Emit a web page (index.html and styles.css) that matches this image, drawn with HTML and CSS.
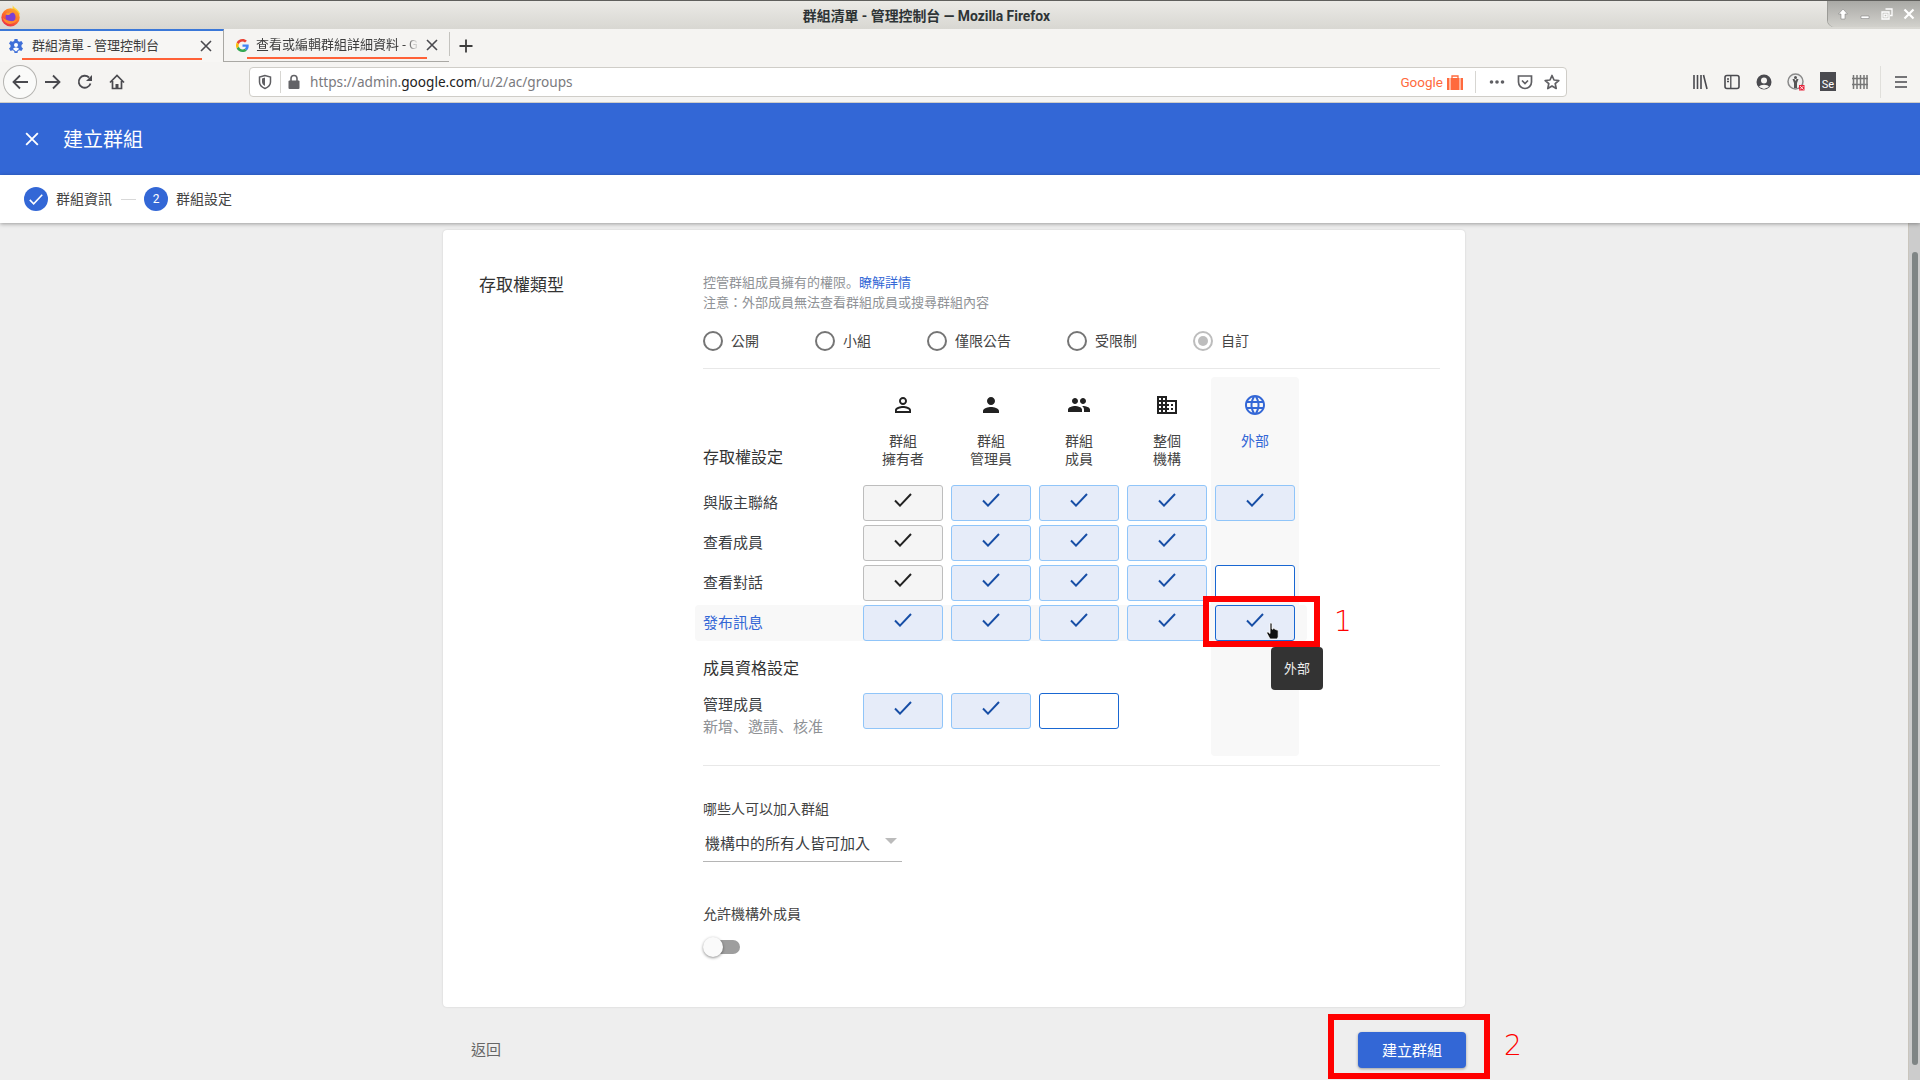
FILE: index.html
```html
<!DOCTYPE html>
<html lang="zh-Hant">
<head>
<meta charset="utf-8">
<title>群組清單 - 管理控制台</title>
<link rel="stylesheet" href="styles.css">
</head>
<body>
<svg class="defs" width="0" height="0" aria-hidden="true">
  <defs>
    <linearGradient id="fxbody" x1="0.8" y1="0" x2="0.2" y2="1">
      <stop offset="0" stop-color="#ffb02e"/><stop offset=".5" stop-color="#ff6a2a"/><stop offset="1" stop-color="#e8274f"/>
    </linearGradient>
  </defs>
  <symbol id="check" viewBox="0 0 18 14"><path d="M1 7.5 6 12.6 17 1" fill="none" stroke="currentColor" stroke-width="2"/></symbol>
  <symbol id="close" viewBox="0 0 12 12"><path d="M1 1 11 11M11 1 1 11" fill="none" stroke="currentColor" stroke-width="1.6"/></symbol>
  <symbol id="gfav" viewBox="0 0 48 48">
    <path fill="#EA4335" d="M24 9.5c3.5 0 6.700 1.200 9.200 3.600l6.900-6.900C35.900 2.400 30.500 0 24 0 14.600 0 6.500 5.400 2.600 13.200l8 6.200C12.500 13.700 17.800 9.500 24 9.500z"/>
    <path fill="#4285F4" d="M46.900 24.500c0-1.600-.1-3.100-.4-4.500H24v9h12.900c-.6 3-2.200 5.500-4.700 7.200l7.700 6c4.500-4.200 7-10.300 7-17.700z"/>
    <path fill="#FBBC05" d="M10.500 28.600c-.5-1.400-.8-3-.8-4.600s.3-3.200.8-4.600l-8-6.200C.9 16.500 0 20.100 0 24s.9 7.500 2.600 10.800l7.900-6.200z"/>
    <path fill="#34A853" d="M24 48c6.500 0 11.900-2.100 15.900-5.800l-7.700-6c-2.200 1.500-4.900 2.300-8.200 2.300-6.200 0-11.500-4.200-13.400-9.900l-8 6.200C6.500 42.600 14.600 48 24 48z"/>
  </symbol>
</svg>

<header class="titlebar">
  <svg class="fx-logo" viewBox="0 0 24 24" width="22" height="24">
    <path fill="#ffd43a" d="M14 0c0 3 6 4 8 10l-9 2z"/>
    <circle cx="11.500" cy="13.500" r="10" fill="url(#fxbody)"/>
    <circle cx="11.500" cy="13" r="5.500" fill="#7b3fd6"/>
    <path fill="#ff9a2e" d="M6 10c2-3 7-3 9-1-2-.5-4 0-4.500 1.500C9 11 7 11 6 10z"/>
    <path fill="#ff8a30" d="M3 14c1 5 6 8 11 6 3-1 5-3 6-6-2 3-6 4-9 3.500-3-.5-6-1.500-8-3.500z"/>
  </svg>
  <div class="window-title">群組清單 - 管理控制台 — Mozilla Firefox</div>
  <div class="window-buttons">
    <svg viewBox="0 0 12 12" width="12" height="12"><path d="M6 1 1.500 6H4v5h4V6h2.500z" fill="#fff" stroke="#777" stroke-width=".5"/></svg>
    <svg viewBox="0 0 12 12" width="12" height="12"><path d="M2 8h8v2.500H2z" fill="#fff" stroke="#777" stroke-width=".5"/></svg>
    <svg viewBox="0 0 12 12" width="12" height="12"><path d="M4.500 1h6.500v6.500H9M1 4h7v7H1zM3 6.200h3v2.600H3z" fill="none" stroke="#fff" stroke-width="1.300"/></svg>
    <svg viewBox="0 0 12 12" width="12" height="12"><path d="M1.500 1.500 10.500 10.500M10.500 1.500 1.500 10.500" fill="none" stroke="#fff" stroke-width="2.200"/></svg>
  </div>
</header>

<nav class="tabstrip">
  <div class="tab tab-active">
    <svg class="favicon" viewBox="0 0 16 16" width="16" height="16"><path fill="#3f6fd8" d="M6.500 1h3l.4 2 1.600.8L13.400 3 15 5.500l-1.500 1.400v2.200L15 10.500 13.400 13l-1.900-.8-1.600.8-.4 2h-3l-.4-2-1.600-.8-1.900.8L1 10.500l1.500-1.400V6.900L1 5.500 2.600 3l1.900.8L6.100 3z"/><circle cx="8" cy="7" r="2" fill="#fff"/><path fill="#fff" d="M5 11c1-2 5-2 6 0l-3 2.500z"/></svg>
    <span class="tab-label">群組清單 - 管理控制台</span>
    <svg class="tab-close" width="12" height="12"><use href="#close"/></svg>
    <span class="tab-mark mark-one"></span>
  </div>
  <div class="tab tab-idle">
    <svg class="favicon favicon-g" width="13" height="13"><use href="#gfav"/></svg>
    <span class="tab-label tab-fade">查看或編輯群組詳細資料 - G</span>
    <svg class="tab-close" width="12" height="12"><use href="#close"/></svg>
    <span class="tab-mark mark-two"></span>
  </div>
  <span class="tab-sep"></span>
  <svg class="new-tab" viewBox="0 0 16 16" width="16" height="16"><path d="M8 1.500v13M1.500 8h13" stroke="currentColor" stroke-width="1.800" fill="none"/></svg>
</nav>

<div class="toolbar">
  <span class="slot slot-back"><svg viewBox="0 0 18 18" width="18" height="18"><path d="M17 9H2.500M9 2.500 2.500 9 9 15.500" fill="none" stroke="currentColor" stroke-width="1.800"/></svg></span>
  <span class="slot slot-forward"><svg viewBox="0 0 18 18" width="18" height="18"><path d="M1 9h14.500M9 2.500 15.500 9 9 15.500" fill="none" stroke="currentColor" stroke-width="1.800"/></svg></span>
  <span class="slot"><svg viewBox="0 0 16 16" width="16" height="16"><path d="M13.500 9.500A6 6 0 1 1 12 3.500" fill="none" stroke="currentColor" stroke-width="1.800"/><path d="M15 1v6H9z" fill="currentColor"/></svg></span>
  <span class="slot"><svg viewBox="0 0 16 16" width="16" height="16"><path d="M1 8.500 8 1.500l7 7M3.500 7v7.500h9V7" fill="none" stroke="currentColor" stroke-width="1.700"/><path d="M6.500 10h3v4.500h-3z" fill="currentColor"/></svg></span>

  <div class="urlbar">
    <svg class="url-shield" viewBox="0 0 16 16" width="16" height="16"><path d="M8 1.500 2.500 3v5c0 3.500 3 5.500 5.500 6.500 2.500-1 5.500-3 5.500-6.500V3z" fill="none" stroke="currentColor" stroke-width="1.500"/><path d="M8 3.500 5 4.500V8c0 2 1.500 3.300 3 4z" fill="currentColor"/></svg>
    <span class="url-sep"></span>
    <svg class="url-lock" viewBox="0 0 14 16" width="14" height="16"><path d="M4 7V4.500a3 3 0 0 1 6 0V7" fill="none" stroke="currentColor" stroke-width="1.600"/><rect x="1.500" y="6.500" width="11" height="8.500" rx="1" fill="currentColor"/></svg>
    <span class="url-text">https://admin.<b>google.com</b>/u/2/ac/groups</span>
    <span class="url-google">Google</span>
    <svg class="url-bag" viewBox="0 0 16 16" width="16" height="16"><path d="M5 4V2h6v2" fill="none" stroke="#ff6a3d" stroke-width="1.300"/><rect x="0" y="4" width="16" height="12" fill="#ff6a3d"/><path d="M3 4v12M13 4v12" stroke="#fff" stroke-width="1"/></svg>
    <span class="url-sep url-sep-right"></span>
    <svg class="url-act" viewBox="0 0 18 16" width="18" height="16"><circle cx="3.500" cy="8" r="1.800" fill="currentColor"/><circle cx="9" cy="8" r="1.800" fill="currentColor"/><circle cx="14.500" cy="8" r="1.800" fill="currentColor"/></svg>
    <svg class="url-act" viewBox="0 0 16 16" width="16" height="16"><path d="M1.500 2h13v6a6.500 6.500 0 0 1-13 0z" fill="none" stroke="currentColor" stroke-width="1.700"/><path d="M5 6.500 8 9.500l3-3" fill="none" stroke="currentColor" stroke-width="1.700"/></svg>
    <svg class="url-act" viewBox="0 0 16 16" width="16" height="16"><path d="M8 1.500 10 6l4.800.5-3.600 3.200 1 4.800L8 12l-4.200 2.500 1-4.800L1.200 6.500 6 6z" fill="none" stroke="currentColor" stroke-width="1.700" stroke-linejoin="round"/></svg>
  </div>

  <div class="tool-group">
    <span class="slot"><svg viewBox="0 0 16 16" width="16" height="16"><path d="M2 1v14M5.500 1v14M9 1v14M11.500 1l3.500 14" fill="none" stroke="currentColor" stroke-width="1.600"/></svg></span>
    <span class="slot"><svg viewBox="0 0 16 16" width="16" height="16"><rect x="1" y="1.500" width="14" height="13" rx="2" fill="none" stroke="currentColor" stroke-width="1.600"/><path d="M6.800 2v12M3 5h2M3 7.500h2" stroke="currentColor" stroke-width="1.300"/></svg></span>
    <span class="slot"><svg viewBox="0 0 16 16" width="16" height="16"><circle cx="8" cy="8" r="7.500" fill="currentColor"/><circle cx="8" cy="6.500" r="3" fill="#f5f4f2"/><path d="M3 13c1-3 9-3 10 0l-5 2z" fill="#f5f4f2"/></svg></span>
    <span class="slot"><svg viewBox="0 0 18 18" width="18" height="18"><circle cx="8.500" cy="8.500" r="7.500" fill="#eee" stroke="#8a8a8a" stroke-width="1.500"/><circle cx="8.500" cy="4.500" r="1.500" fill="#555"/><path d="M5.500 6h2l1 2 1-2h2L10 10v5H7v-5z" fill="#555"/><rect x="12" y="12" width="5.500" height="5.500" fill="#e8243c"/><path d="M13 13l3.500 3.500M16.500 13 13 16.500" stroke="#fff" stroke-width=".8"/></svg></span>
    <span class="slot"><span class="se-icon">Se</span></span>
    <span class="slot"><svg viewBox="0 0 16 16" width="16" height="16"><path d="M1.500 1v14M5 1v14M8.500 1v14M12 1v14M15 1v14M0 4.500h16M0 10.500h16" fill="none" stroke="#777" stroke-width="1.500"/></svg></span>
    <span class="tool-sep"></span>
    <span class="slot slot-menu"><svg viewBox="0 0 14 14" width="14" height="14"><path d="M1 2h12M1 7h12M1 12h12" stroke="currentColor" stroke-width="1.600"/></svg></span>
  </div>
</div>

<div class="appbar">
  <svg class="appbar-close" width="14" height="14"><use href="#close"/></svg>
  <h1 class="appbar-title">建立群組</h1>
</div>

<div class="stepper">
  <span class="step-dot"><svg width="14" height="11"><use href="#check"/></svg></span>
  <span class="step-label">群組資訊</span>
  <span class="step-line"></span>
  <span class="step-dot">2</span>
  <span class="step-label">群組設定</span>
</div>

<div class="workspace">
  <main class="page">
    <section class="card">
      <h2 class="card-heading">存取權類型</h2>
      <div class="card-body">
        <p class="help">控管群組成員擁有的權限。<a class="link">瞭解詳情</a><br>注意：外部成員無法查看群組成員或搜尋群組內容</p>

        <div class="radios">
          <label class="radio"><span class="radio-ring"></span>公開</label>
          <label class="radio"><span class="radio-ring"></span>小組</label>
          <label class="radio"><span class="radio-ring"></span>僅限公告</label>
          <label class="radio"><span class="radio-ring"></span>受限制</label>
          <label class="radio"><span class="radio-ring radio-on"></span>自訂</label>
        </div>

        <hr class="rule">

        <div class="matrix">
          <div class="col-shade"></div>
          <div class="row-shade"></div>

          <div class="matrix-title r1 c1">存取權設定</div>
          <div class="head r1 c2"><svg viewBox="0 0 24 24" width="24" height="24"><path d="M12 5.900a2.100 2.100 0 1 1 0 4.200 2.100 2.100 0 0 1 0-4.200m0 9c2.970 0 6.100 1.460 6.100 2.100v1.100H5.900V17c0-.64 3.130-2.100 6.100-2.100M12 4C9.790 4 8 5.790 8 8s1.790 4 4 4 4-1.790 4-4-1.790-4-4-4zm0 9c-2.670 0-8 1.340-8 4v3h16v-3c0-2.660-5.330-4-8-4z"/></svg><span>群組<br>擁有者</span></div>
          <div class="head r1 c3"><svg viewBox="0 0 24 24" width="24" height="24"><path d="M12 12c2.210 0 4-1.790 4-4s-1.790-4-4-4-4 1.790-4 4 1.790 4 4 4zm0 2c-2.670 0-8 1.340-8 4v2h16v-2c0-2.660-5.330-4-8-4z"/></svg><span>群組<br>管理員</span></div>
          <div class="head r1 c4"><svg viewBox="0 0 24 24" width="24" height="24"><path d="M16 11c1.660 0 2.990-1.340 2.990-3S17.660 5 16 5c-1.660 0-3 1.340-3 3s1.340 3 3 3zm-8 0c1.660 0 2.990-1.340 2.990-3S9.660 5 8 5C6.340 5 5 6.340 5 8s1.340 3 3 3zm0 2c-2.330 0-7 1.170-7 3.500V19h14v-2.500c0-2.330-4.670-3.500-7-3.500zm8 0c-.29 0-.62.020-.97.050 1.160.84 1.970 1.970 1.970 3.450V19h6v-2.500c0-2.330-4.670-3.500-7-3.500z"/></svg><span>群組<br>成員</span></div>
          <div class="head r1 c5"><svg viewBox="0 0 24 24" width="24" height="24"><path d="M12 7V3H2v18h20V7H12zM6 19H4v-2h2v2zm0-4H4v-2h2v2zm0-4H4V9h2v2zm0-4H4V5h2v2zm4 12H8v-2h2v2zm0-4H8v-2h2v2zm0-4H8V9h2v2zm0-4H8V5h2v2zm10 12h-8v-2h2v-2h-2v-2h2v-2h-2V9h8v10zm-2-8h-2v2h2v-2zm0 4h-2v2h2v-2z"/></svg><span>整個<br>機構</span></div>
          <div class="head head-blue r1 c6"><svg viewBox="0 0 24 24" width="24" height="24"><path d="M11.990 2C6.470 2 2 6.480 2 12s4.470 10 9.990 10C17.520 22 22 17.520 22 12S17.520 2 11.990 2zm6.930 6h-2.950c-.32-1.250-.78-2.450-1.380-3.560 1.840.63 3.370 1.910 4.330 3.560zM12 4.040c.83 1.200 1.480 2.530 1.910 3.960h-3.820c.43-1.430 1.080-2.760 1.910-3.960zM4.260 14C4.100 13.360 4 12.690 4 12s.1-1.360.26-2h3.380c-.08.66-.14 1.320-.14 2 0 .68.060 1.340.14 2H4.260zm.82 2h2.950c.32 1.250.78 2.450 1.380 3.560-1.840-.63-3.370-1.900-4.330-3.560zm2.950-8H5.080c.96-1.660 2.490-2.930 4.330-3.560C8.810 5.550 8.350 6.750 8.030 8zM12 19.960c-.83-1.200-1.480-2.530-1.910-3.960h3.820c-.43 1.430-1.080 2.760-1.910 3.960zM14.340 14H9.660c-.09-.66-.16-1.320-.16-2 0-.68.070-1.350.16-2h4.680c.09.650.16 1.320.16 2 0 .68-.07 1.340-.16 2zm.25 5.560c.6-1.110 1.060-2.310 1.380-3.560h2.950c-.96 1.650-2.490 2.930-4.330 3.560zM16.360 14c.08-.66.14-1.320.14-2 0-.68-.06-1.340-.14-2h3.380c.16.64.26 1.310.26 2s-.1 1.360-.26 2h-3.380z"/></svg><span>外部</span></div>

          <div class="row-label r2 c1">與版主聯絡</div>
          <div class="cell fixed r2 c2"><svg width="18" height="14"><use href="#check"/></svg></div>
          <div class="cell on r2 c3"><svg width="18" height="14"><use href="#check"/></svg></div>
          <div class="cell on r2 c4"><svg width="18" height="14"><use href="#check"/></svg></div>
          <div class="cell on r2 c5"><svg width="18" height="14"><use href="#check"/></svg></div>
          <div class="cell on r2 c6"><svg width="18" height="14"><use href="#check"/></svg></div>

          <div class="row-label r3 c1">查看成員</div>
          <div class="cell fixed r3 c2"><svg width="18" height="14"><use href="#check"/></svg></div>
          <div class="cell on r3 c3"><svg width="18" height="14"><use href="#check"/></svg></div>
          <div class="cell on r3 c4"><svg width="18" height="14"><use href="#check"/></svg></div>
          <div class="cell on r3 c5"><svg width="18" height="14"><use href="#check"/></svg></div>

          <div class="row-label r4 c1">查看對話</div>
          <div class="cell fixed r4 c2"><svg width="18" height="14"><use href="#check"/></svg></div>
          <div class="cell on r4 c3"><svg width="18" height="14"><use href="#check"/></svg></div>
          <div class="cell on r4 c4"><svg width="18" height="14"><use href="#check"/></svg></div>
          <div class="cell on r4 c5"><svg width="18" height="14"><use href="#check"/></svg></div>
          <div class="cell off r4 c6"></div>

          <div class="row-label row-label-blue r5 c1">發布訊息</div>
          <div class="cell on r5 c2"><svg width="18" height="14"><use href="#check"/></svg></div>
          <div class="cell on r5 c3"><svg width="18" height="14"><use href="#check"/></svg></div>
          <div class="cell on r5 c4"><svg width="18" height="14"><use href="#check"/></svg></div>
          <div class="cell on r5 c5"><svg width="18" height="14"><use href="#check"/></svg></div>
          <div class="cell on hover r5 c6"><svg width="18" height="14"><use href="#check"/></svg></div>

          <div class="matrix-subtitle r6 c1">成員資格設定</div>

          <div class="row-label row-label-two r7 c1">管理成員<small>新增、邀請、核准</small></div>
          <div class="cell on r7 c2"><svg width="18" height="14"><use href="#check"/></svg></div>
          <div class="cell on r7 c3"><svg width="18" height="14"><use href="#check"/></svg></div>
          <div class="cell off r7 c4"></div>
        </div>

        <hr class="rule rule-lower">

        <div class="field-label">哪些人可以加入群組</div>
        <div class="select"><span>機構中的所有人皆可加入</span><i class="select-arrow"></i></div>

        <div class="field-label field-label-toggle">允許機構外成員</div>
        <div class="toggle"><span class="toggle-track"></span><span class="toggle-knob"></span></div>
      </div>
    </section>

    <footer class="page-foot">
      <span class="back">返回</span>
      <button class="create">建立群組</button>
    </footer>
  </main>
  <div class="scrollbar"><span class="scroll-thumb"></span></div>
</div>

<div class="mark-box mark-box-one"></div>
<div class="mark-num mark-num-one">1</div>
<div class="mark-box mark-box-two"></div>
<div class="mark-num mark-num-two">2</div>
<div class="tooltip">外部</div>
<svg class="pointer" viewBox="0 0 14 18" width="14" height="18"><path d="M4 1.500c.8-.8 2-.3 2 .8V7l1 .2V6.500c.8-.6 1.600-.3 1.800.5l.2.500c.7-.5 1.500-.2 1.700.6.800-.3 1.500.2 1.500 1V15l-1 2H4L1 11.500c-.5-1 .5-2 1.500-1.200L4 11.500z" fill="#111" stroke="#fff" stroke-width=".8"/></svg>
</body>
</html>
```
FILE: styles.css
```css
* { box-sizing: border-box; }
html, body { margin: 0; padding: 0; }
body {
  position: relative;
  width: 1920px;
  height: 1080px;
  overflow: hidden;
  display: flex;
  flex-direction: column;
  background: #eee;
  color: #3c4043;
  font-family: Roboto, "Noto Sans CJK TC", sans-serif;
  font-size: 14px;
}
.defs { position: absolute; }
svg { display: block; flex: none; }

/* window title */
.titlebar {
  height: 29px;
  flex: none;
  display: flex;
  align-items: flex-start;
  background: linear-gradient(#ebeae6, #d8d7d2);
  border-top: 1px solid #5f5f5c;
}
.fx-logo { margin-top: 3px; }
.window-title {
  flex: 1;
  padding-left: 3px;
  text-align: center;
  font-size: 13.900px;
  font-weight: 700;
  line-height: 30px;
  color: #2e3436;
}
.window-buttons {
  width: 92px;
  height: 26px;
  display: flex;
  align-items: center;
  justify-content: space-between;
  padding: 0 5px 0 9px;
  background: linear-gradient(#a9a9a5, #d2d1cc);
  border-bottom-left-radius: 7px;
  box-shadow: -1px 0 0 #9b9b97;
}

/* tabs */
.tabstrip {
  height: 33px;
  flex: none;
  display: flex;
  align-items: center;
  background: #f5f4f2;
  font-size: 13px;
  color: #3d3d3d;
}
.tab {
  position: relative;
  height: 33px;
  display: flex;
  align-items: center;
  gap: 8px;
  flex: none;
}
.tab-active {
  width: 224px;
  padding: 0 11px 2px 8px;
  border-top: 2px solid #3b78d8;
  border-right: 1px solid #a9a8a4;
  background: #f7f6f4;
}
.tab-idle {
  width: 225px;
  padding: 0 11px 0 10px;
  gap: 6px;
  border-bottom: 1px solid #a9a8a4;
}
.tab-label { flex: 1; white-space: nowrap; line-height: 20px; }
.tab-fade {
  -webkit-mask-image: linear-gradient(90deg, #000 92%, rgba(0,0,0,.2) 97%);
  mask-image: linear-gradient(90deg, #000 92%, rgba(0,0,0,.2) 97%);
}
.favicon-g { margin: 0 1.500px; }
.tab-close { color: #4a4a4f; width: 12px; height: 12px; }
.tab-mark { position: absolute; bottom: 2px; height: 2px; background: #ff6137; }
.mark-one { left: 22px; width: 180px; }
.mark-two { left: 23px; width: 180px; }
.tab-sep { height: 24px; width: 1px; background: #c4c3bf; flex: none; margin-bottom: 4px; }
.new-tab { margin: 0 9px 0 8px; color: #3d3d3d; }
.tabstrip::after { content: ""; flex: 1; height: 33px; border-bottom: 1px solid #a9a8a4; }

/* toolbar */
.toolbar {
  height: 41px;
  flex: none;
  display: flex;
  align-items: center;
  padding: 0 0 1px 4px;
  background: #f5f4f2;
  border-bottom: 1px solid #cfcdc8;
  color: #4a4a4f;
}
.slot {
  width: 32px;
  height: 32px;
  flex: none;
  display: flex;
  align-items: center;
  justify-content: center;
}
.slot-back {
  border-radius: 50%;
  box-shadow: 0 0 0 1px #b4b3b0;
  background: #fafaf9;
}
.slot-forward { margin-left: 1px; }
.urlbar {
  width: 1318px;
  height: 30px;
  margin-left: 116px;
  flex: none;
  display: flex;
  align-items: center;
  padding: 0 6px 0 7px;
  background: #fff;
  border: 1px solid #cfcdc8;
  border-radius: 4px;
}
.url-shield { color: #5f5f63; }
.url-sep { width: 1px; height: 22px; background: #d7d6d2; margin: 0 6px 0 7px; flex: none; }
.url-lock { color: #636367; }
.url-text {
  margin-left: 9px;
  font-family: "Noto Sans", sans-serif;
  font-size: 13.620px;
  line-height: 20px;
  color: #7a7a7e;
  white-space: nowrap;
}
.url-text b { font-weight: 400; color: #222; }
.url-google {
  margin-left: auto;
  font-size: 13.500px;
  line-height: 20px;
  color: #ff6a3d;
}
.url-bag { margin-left: 4px; }
.url-sep-right { margin: 0 12px 0 12px; }
.url-act { color: #5f5f63; }
.url-act + .url-act { margin-left: 11px; }
.tool-group { display: flex; align-items: center; margin-left: 117px; }
.se-icon {
  width: 16px;
  height: 19px;
  padding-top: 6px;
  background: #4a4a4f;
  color: #fff;
  font-size: 11px;
  line-height: 13px;
  text-align: center;
}
.tool-sep { width: 1px; height: 32px; background: #e0dfdb; margin-left: 4px; flex: none; }
.slot-menu { margin-left: 4px; }

/* app header */
.appbar {
  height: 72px;
  flex: none;
  display: flex;
  align-items: center;
  padding-left: 25px;
  background: #3367d6;
  color: #fff;
}
.appbar-title { margin: 2px 0 0 24px; font-size: 20px; font-weight: 400; line-height: 28px; }
.stepper {
  position: relative;
  height: 48px;
  flex: none;
  display: flex;
  align-items: center;
  padding-left: 24px;
  background: #fff;
  box-shadow: 0 1px 4px rgba(0,0,0,.35);
  font-size: 14px;
}
.step-dot {
  width: 24px;
  height: 24px;
  border-radius: 50%;
  display: flex;
  align-items: center;
  justify-content: center;
  background: #3367d6;
  color: #fff;
  font-size: 12px;
}
.step-label { margin-left: 8px; line-height: 20px; color: #444; }
.step-line { width: 15px; height: 1px; background: #d8d8d8; margin: 0 8px 0 9px; }

/* content */
.workspace { flex: 1; min-height: 0; display: flex; }
.page {
  flex: 1;
  display: flex;
  flex-direction: column;
  align-items: center;
  padding-top: 7px;
}
.card {
  width: 1022px;
  height: 777px;
  flex: none;
  display: flex;
  padding: 42px 25px 0 36px;
  background: #fff;
  border-radius: 4px;
  box-shadow: 0 0 2px rgba(0,0,0,.15);
}
.card-heading {
  width: 224px;
  flex: none;
  margin: 1px 0 0;
  font-size: 17px;
  font-weight: 400;
  line-height: 24px;
  color: #333;
}
.card-body { flex: 1; min-width: 0; }
.help {
  margin: 1px 0 0;
  font-family: Roboto, "Noto Sans CJK JP", sans-serif;
  font-feature-settings: "locl" 0;
  font-size: 13px;
  line-height: 20px;
  color: #8f9296;
}
.link { color: #3367d6; }
.radios { display: flex; gap: 56px; margin-top: 18px; }
.radio { display: flex; align-items: center; gap: 8px; height: 20px; font-size: 14px; line-height: 20px; color: #444; }
.radio-ring {
  width: 20px;
  height: 20px;
  border: 2px solid #757575;
  border-radius: 50%;
  display: flex;
  align-items: center;
  justify-content: center;
}
.radio-on { border-color: #bdbdbd; }
.radio-on::after { content: ""; width: 10px; height: 10px; border-radius: 50%; background: #bdbdbd; }
.rule { height: 1px; margin: 17px 0 0; border: 0; background: #e8e8e8; }
.rule-lower { margin-top: 9px; }

/* matrix */
.matrix {
  display: grid;
  grid-template-columns: 152px repeat(5, 80px);
  grid-template-rows: 104px 36px 36px 36px 36px 44px 63px;
  gap: 4px 8px;
  margin-top: 8px;
}
.col-shade {
  grid-column: 6;
  grid-row: 1 / -1;
  margin: 0 -4px;
  background: #f8f8f8;
  border-radius: 4px;
}
.row-shade {
  grid-column: 1 / -1;
  grid-row: 5;
  margin: 0 -12px 0 -8px;
  background: #f8f8f8;
  border-radius: 4px;
}
.r1 { grid-row: 1; } .r2 { grid-row: 2; } .r3 { grid-row: 3; } .r4 { grid-row: 4; }
.r5 { grid-row: 5; } .r6 { grid-row: 6; } .r7 { grid-row: 7; }
.c1 { grid-column: 1; } .c2 { grid-column: 2; } .c3 { grid-column: 3; }
.c4 { grid-column: 4; } .c5 { grid-column: 5; } .c6 { grid-column: 6; }
.matrix-title { align-self: end; padding-bottom: 11px; font-size: 16px; line-height: 24px; color: #333; }
.head {
  display: flex;
  flex-direction: column;
  align-items: center;
  padding-top: 16px;
  gap: 15px;
  text-align: center;
  font-size: 14px;
  line-height: 18px;
  color: #444;
  fill: #212121;
}
.head-blue { color: #3367d6; fill: #3367d6; }
.row-label { align-self: center; font-size: 15px; line-height: 22px; color: #3c4043; }
.row-label-blue { color: #3367d6; }
.row-label-two { align-self: start; padding-top: 1px; }
.row-label small {
  display: block;
  font-family: Roboto, "Noto Sans CJK JP", sans-serif;
  font-feature-settings: "locl" 0;
  font-size: 15px;
  line-height: 22px;
  color: #8f9296;
}
.matrix-subtitle { align-self: end; font-size: 16px; line-height: 24px; padding-bottom: 8px; color: #333; grid-column: 1 / 5; }
.cell {
  height: 36px;
  display: flex;
  justify-content: center;
  padding-top: 7px;
  border: 1px solid;
  border-radius: 3px;
}
.cell svg { width: 18px; height: 14px; }
.fixed { background: #f5f5f5; border-color: #bdbdbd; color: #222; }
.on { background: #e6ecf9; border-color: #90c5f9; color: #174ea6; }
.off { background: #fff; border-color: #1967d2; }
.hover { border-color: #1967d2; }

/* fields */
.field-label { margin-top: 33px; font-size: 14px; line-height: 20px; color: #444; }
.select {
  width: 199px;
  height: 43px;
  display: flex;
  justify-content: space-between;
  align-items: flex-start;
  padding: 14px 5px 0 2px;
  border-bottom: 1px solid #b5b5b5;
  font-size: 15px;
  line-height: 22px;
  color: #3c4043;
}
.select-arrow {
  width: 0;
  height: 0;
  margin-top: 5px;
  border: 6px solid transparent;
  border-top-color: #bbb;
  border-bottom-width: 0;
}
.field-label-toggle { margin-top: 42px; }
.toggle {
  position: relative;
  width: 37px;
  height: 20px;
  margin-top: 13px;
  display: flex;
  align-items: center;
}
.toggle-track { width: 35px; height: 14px; margin-left: 2px; border-radius: 7px; background: #9e9e9e; }
.toggle-knob {
  position: absolute;
  left: 0;
  top: 0;
  width: 20px;
  height: 20px;
  border-radius: 50%;
  background: #fafafa;
  box-shadow: 0 1px 3px rgba(0,0,0,.45);
}

/* footer */
.page-foot {
  width: 1022px;
  margin-top: 25px;
  display: flex;
  justify-content: space-between;
  align-items: center;
  padding-left: 28px;
}
.back { font-size: 15px; line-height: 22px; color: #666; }
.create {
  width: 108px;
  height: 36px;
  margin-right: -1px;
  padding: 0 0 2px;
  border: 0;
  border-radius: 4px;
  background: #3367d6;
  color: #fff;
  font: inherit;
  font-size: 15px;
  box-shadow: 0 1px 3px rgba(0,0,0,.35);
}
.scrollbar {
  width: 12px;
  flex: none;
  padding: 29px 2px 15px 3px;
  background: #ccc;
  border-left: 1px solid #c9c5bd;
}
.scroll-thumb { display: block; width: 6px; height: 100%; border-radius: 3px; background: #7f8585; }

/* overlays */
.mark-box { position: absolute; border: 6px solid #f00; }
.mark-box-one { left: 1203px; top: 596px; width: 117px; height: 51px; }
.mark-box-two { left: 1328px; top: 1014px; width: 162px; height: 65px; }
.mark-num {
  position: absolute;
  color: #f00;
  font-family: "DejaVu Sans", sans-serif;
  font-size: 28px;
  font-weight: 200;
  line-height: 32px;
}
.mark-num-one { left: 1334px; top: 606px; }
.mark-num-two { left: 1504px; top: 1030px; }
.tooltip {
  position: absolute;
  left: 1271px;
  top: 647px;
  width: 52px;
  height: 43px;
  padding-bottom: 2px;
  display: flex;
  align-items: center;
  justify-content: center;
  background: #333;
  border-radius: 4px;
  color: #eee;
  font-size: 13px;
}
.pointer { position: absolute; left: 1266px; top: 622px; }
```
